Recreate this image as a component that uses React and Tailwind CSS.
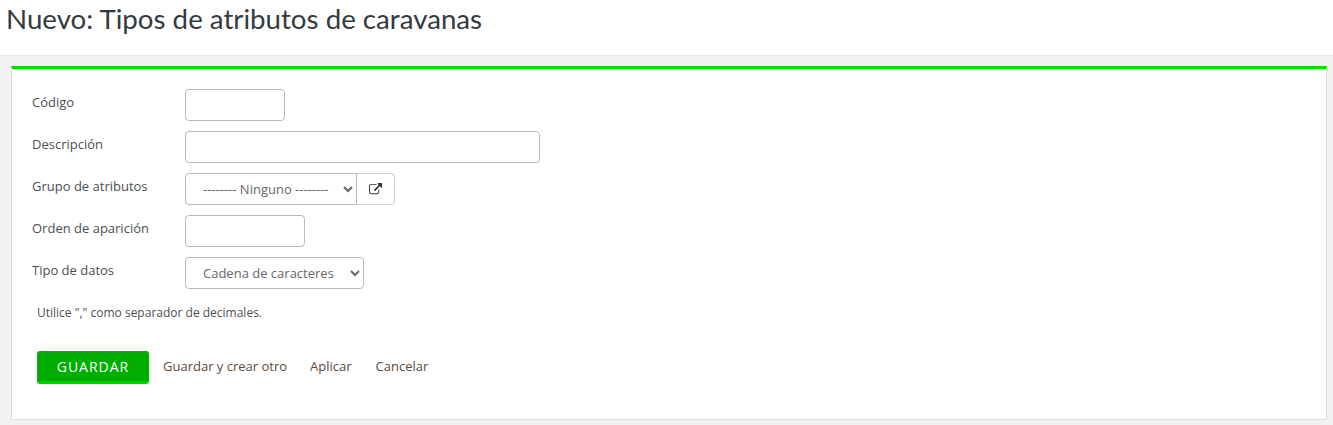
import React from 'react';

const fieldBox = 'h-8 rounded border border-[#b9b9b9] bg-white';
const selectBox = 'h-8 bg-white pl-[13px] text-[13px] text-[#666666] outline-none';
const linkStyle = 'pb-[2px] text-[13px] text-[#5c4a3c]';

const FormRow = ({ label, children }) => (
  <div className="flex items-start">
    <label className="w-[153px] pt-[3px] text-[13px] leading-[20px] text-[#4a4f55]">{label}</label>
    {children}
  </div>
);

const App = () => {
  return (
    <div className="min-h-[425px] bg-[#f2f2f2] font-['Open_Sans',sans-serif]">
      {/* Title bar */}
      <div className="h-14 border-b border-[#e8e8e8] bg-white pl-[6px]">
        <h1 className="font-['Lato',sans-serif] text-[27.7px] leading-[38px] font-normal text-[#333a40]">
          Nuevo: Tipos de atributos de caravanas
        </h1>
      </div>

      {/* Form card */}
      <div className="mx-[6px] mt-[10px] ml-[11px] h-[354px] border-x border-b border-t-[3px] border-[#dedede] border-t-[#00e000] bg-white pl-5 pt-5">
        <div className="flex flex-col gap-[10px]">
          <FormRow label="Código">
            <input className={`${fieldBox} w-[100px]`} />
          </FormRow>
          <FormRow label="Descripción">
            <input className={`${fieldBox} w-[355px]`} />
          </FormRow>
          <FormRow label="Grupo de atributos">
            <div className="flex">
              <select className={`${selectBox} w-[172px] rounded-l border border-[#b9b9b9]`}>
                <option>-------- Ninguno --------</option>
              </select>
              <a className="flex h-8 w-[38px] items-center justify-center rounded-r border border-l-0 border-[#cfcfcf] bg-white">
                <svg viewBox="0 0 1792 1792" className="h-[13px] w-[13px] fill-[#2f3338]">
                  <path d="M1408 928v320q0 119-84.5 203.5t-203.5 84.5h-832q-119 0-203.5-84.5t-84.5-203.5v-832q0-119 84.5-203.5t203.5-84.5h704q14 0 23 9t9 23v64q0 14-9 23t-23 9h-704q-66 0-113 47t-47 113v832q0 66 47 113t113 47h832q66 0 113-47t47-113v-320q0-14 9-23t23-9h64q14 0 23 9t9 23zm384-864v512q0 26-19 45t-45 19-45-19l-176-176-652 652q-10 10-23 10t-23-10l-114-114q-10-10-10-23t10-23l652-652-176-176q-19-19-19-45t19-45 45-19h512q26 0 45 19t19 45z" />
                </svg>
              </a>
            </div>
          </FormRow>
          <FormRow label="Orden de aparición">
            <input className={`${fieldBox} w-[120px]`} />
          </FormRow>
          <FormRow label="Tipo de datos">
            <select className={`${selectBox} w-[179px] rounded border border-[#b9b9b9]`}>
              <option>Cadena de caracteres</option>
            </select>
          </FormRow>
        </div>

        <p className="mt-[15px] ml-[5px] text-[12px] leading-[18px] text-[#4a4f55]">
          Utilice "," como separador de decimales.
        </p>

        {/* Actions */}
        <div className="mt-[29px] ml-[5px] flex items-center">
          <button className="h-[33px] w-[112px] rounded-[3px] border-b-[3px] border-[#00d000] bg-[#00ae00] text-[14px] font-normal tracking-[1px] text-white">
            GUARDAR
          </button>
          <a className={`ml-[14px] ${linkStyle}`}>Guardar y crear otro</a>
          <a className={`ml-[23px] ${linkStyle}`}>Aplicar</a>
          <a className={`ml-[24px] ${linkStyle}`}>Cancelar</a>
        </div>
      </div>
    </div>
  );
};

export default App;
